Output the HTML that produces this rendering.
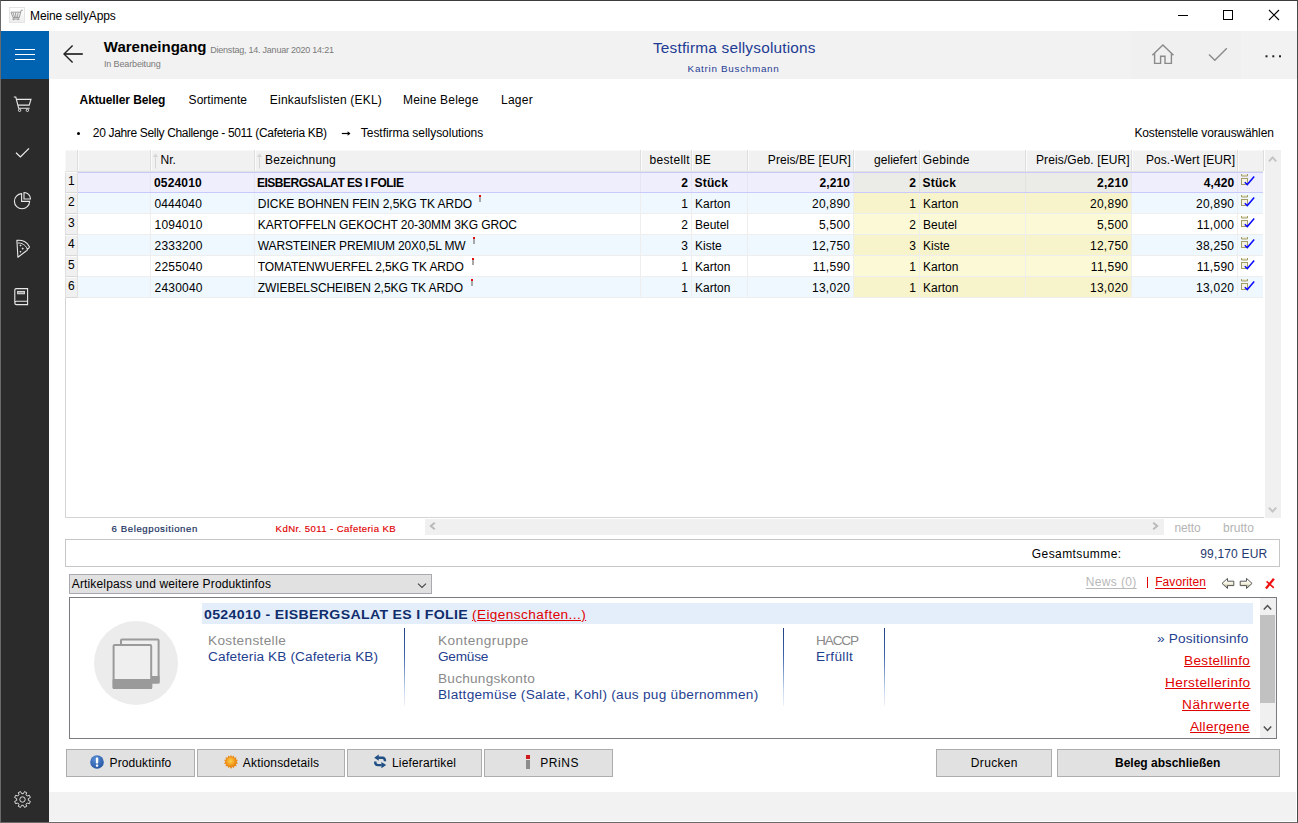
<!DOCTYPE html>
<html lang="de">
<head>
<meta charset="utf-8">
<title>Meine sellyApps</title>
<style>
*{box-sizing:border-box;margin:0;padding:0}
html,body{width:1298px;height:823px;overflow:hidden;background:#fff}
body{font-family:"Liberation Sans",sans-serif;font-size:12px;color:#000;position:relative}
.a{position:absolute}
.t{position:absolute;white-space:nowrap;line-height:1}
.b{font-weight:bold}
svg{position:absolute;overflow:visible}
/* window frame */
#win{position:absolute;left:0;top:0;width:1298px;height:823px;border:1px solid #4a4a4a;border-top-color:#3c3c3c;border-left-color:#6a6a6a;border-bottom-color:#6a6a6a}
/* CHROME-START */
#titlebar{left:1px;top:1px;width:1296px;height:30px;background:#fff}
#hdr{left:49px;top:31px;width:1248px;height:48px;background:#f2f2f2}
#hdr2{left:1131px;top:31px;width:110px;height:48px;background:#f0f0f0}
#burger{left:1px;top:31px;width:48px;height:48px;background:#0063b1}
#side{left:1px;top:79px;width:48px;height:743px;background:#2b2b2b}
#foot{left:49px;top:792px;width:1247px;height:29px;background:#f2f2f2}
/* CHROME-END */
.vd{font-size:12.5px;letter-spacing:0.1px;transform:scaleX(1.09);transform-origin:0 0}
.vd.b{transform:scaleX(1.13)}
.vd.g{color:#8a8a8a}
.vd.n{color:#1f3f8f}
.vd.r{color:#e00000;text-decoration:underline}
.vl{top:628px;width:1px;height:78px;background:linear-gradient(#1f3f7f,#3c64a8 35%,#c8d8ee 80%,#f0f4fb)}
.btn{position:absolute;top:749px;height:28px;background:#e1e1e1;border:1px solid #adadad}

.ex{position:absolute;width:2px;height:7px;background:linear-gradient(#e01010 0,#e01010 2px,#a8a8a8 2px,#a8a8a8 7px)}
#ex1{left:479px}#ex3{left:473px}#ex4{left:472px}#ex5{left:471px}

/* TUNE-START */
#ttl{left:30.0px!important;right:auto!important;top:10px!important;letter-spacing:-0.114px!important}
#h1{left:103.8px!important;right:auto!important;top:39px!important;letter-spacing:-0.009px!important}
#hdate{left:210.3px!important;right:auto!important;top:46px!important;letter-spacing:-0.233px!important}
#hstat{left:104.0px!important;right:auto!important;top:60px!important;letter-spacing:-0.141px!important}
#hfirm{left:652.9px!important;right:auto!important;top:40px!important;letter-spacing:0.192px!important}
#huser{left:687.6px!important;right:auto!important;top:64px!important;letter-spacing:0.699px!important}
#tab1{left:79.6px!important;right:auto!important;top:94px!important;letter-spacing:-0.113px!important}
#tab2{left:188.6px!important;right:auto!important;top:94px!important;letter-spacing:0.035px!important}
#tab3{left:269.8px!important;right:auto!important;top:94px!important;letter-spacing:0.210px!important}
#tab4{left:403.0px!important;right:auto!important;top:94px!important;letter-spacing:0.182px!important}
#tab5{left:501.0px!important;right:auto!important;top:94px!important;letter-spacing:0.250px!important}
#bc1{left:92.8px!important;right:auto!important;top:127px!important;letter-spacing:-0.333px!important}
#bc2{left:360.8px!important;right:auto!important;top:127px!important;letter-spacing:-0.043px!important}
#bc3{left:1134.4px!important;right:auto!important;top:127px!important;letter-spacing:-0.137px!important}
#th0{left:160.6px!important;right:auto!important;top:154px!important;letter-spacing:0.000px!important}
#th1{left:265.0px!important;right:auto!important;top:154px!important;letter-spacing:0.130px!important}
#th2{left:649.6px!important;right:auto!important;top:154px!important;letter-spacing:0.287px!important}
#th3{left:694.8px!important;right:auto!important;top:154px!important;letter-spacing:0.000px!important}
#th4{left:767.8px!important;right:auto!important;top:154px!important;letter-spacing:0.077px!important}
#th5{left:874.1px!important;right:auto!important;top:154px!important;letter-spacing:0.025px!important}
#th6{left:922.8px!important;right:auto!important;top:154px!important;letter-spacing:0.218px!important}
#th7{left:1036.0px!important;right:auto!important;top:154px!important;letter-spacing:0.108px!important}
#th8{left:1145.9px!important;right:auto!important;top:154px!important;letter-spacing:0.057px!important}
#r0c0{left:154.0px!important;right:auto!important;top:177px!important;letter-spacing:0.166px!important}
#r0c1{left:257.0px!important;right:auto!important;top:177px!important;letter-spacing:-0.492px!important}
#r1c1{left:257.8px!important;right:auto!important;top:198px!important;letter-spacing:-0.026px!important}
#r2c1{left:257.8px!important;right:auto!important;top:219px!important;letter-spacing:-0.088px!important}
#r3c1{left:257.8px!important;right:auto!important;top:240px!important;letter-spacing:-0.143px!important}
#r4c1{left:257.8px!important;right:auto!important;top:261px!important;letter-spacing:-0.111px!important}
#r5c1{left:257.8px!important;right:auto!important;top:282px!important;letter-spacing:-0.071px!important}
#r0c3{left:694.6px!important;right:auto!important;top:177px!important;letter-spacing:0.150px!important}
#r0c6{left:922.6px!important;right:auto!important;top:177px!important;letter-spacing:0.150px!important}
#r0c4{left:819.4px!important;right:auto!important;top:177px!important;letter-spacing:0.150px!important}
#r0c7{left:1097.0px!important;right:auto!important;top:177px!important;letter-spacing:0.300px!important}
#r0c8{left:1203.8px!important;right:auto!important;top:177px!important;letter-spacing:0.100px!important}
#st1{left:111.6px!important;right:auto!important;top:524px!important;letter-spacing:0.588px!important}
#st2{left:275.6px!important;right:auto!important;top:524px!important;letter-spacing:0.412px!important}
#st3{left:1174.6px!important;right:auto!important;top:522px!important;letter-spacing:-0.175px!important}
#st4{left:1223.0px!important;right:auto!important;top:522px!important;letter-spacing:0.040px!important}
#sum1{left:1031.8px!important;right:auto!important;top:548px!important;letter-spacing:0.419px!important}
#sum2{left:1200.2px!important;right:auto!important;top:548px!important;letter-spacing:0.179px!important}
#dd{left:71.8px!important;right:auto!important;top:578px!important;letter-spacing:0.143px!important}
#nw1{left:1085.8px!important;right:auto!important;top:576px!important;letter-spacing:0.355px!important}
#nw2{left:1155.2px!important;right:auto!important;top:576px!important;letter-spacing:0.085px!important}
#ip0{left:203.6px!important;right:auto!important;top:609px!important;letter-spacing:0.289px!important}
#ip0b{left:471.8px!important;right:auto!important;top:609px!important;letter-spacing:0.374px!important}
#ip1{left:207.8px!important;right:auto!important;top:635px!important;letter-spacing:0.303px!important}
#ip2{left:207.8px!important;right:auto!important;top:651px!important;letter-spacing:0.096px!important}
#ip3{left:437.8px!important;right:auto!important;top:635px!important;letter-spacing:0.403px!important}
#ip4{left:437.8px!important;right:auto!important;top:651px!important;letter-spacing:-0.210px!important}
#ip5{left:437.8px!important;right:auto!important;top:673px!important;letter-spacing:0.217px!important}
#ip6{left:437.8px!important;right:auto!important;top:689px!important;letter-spacing:0.253px!important}
#ip7{left:815.8px!important;right:auto!important;top:635px!important;letter-spacing:-1.050px!important}
#ip8{left:815.8px!important;right:auto!important;top:651px!important;letter-spacing:0.316px!important}
#ip9{left:1156.8px!important;right:auto!important;top:633px!important;letter-spacing:0.171px!important}
#ip10{left:1184.1px!important;right:auto!important;top:655px!important;letter-spacing:0.280px!important}
#ip11{left:1164.5px!important;right:auto!important;top:677px!important;letter-spacing:0.342px!important}
#ip12{left:1182.2px!important;right:auto!important;top:699px!important;letter-spacing:0.550px!important}
#ip13{left:1189.8px!important;right:auto!important;top:721px!important;letter-spacing:0.225px!important}
#b1{left:109.6px!important;right:auto!important;top:757px!important;letter-spacing:0.100px!important}
#b2{left:242.8px!important;right:auto!important;top:757px!important;letter-spacing:0.167px!important}
#b3{left:392.0px!important;right:auto!important;top:757px!important;letter-spacing:0.158px!important}
#b4{left:540.2px!important;right:auto!important;top:757px!important;letter-spacing:0.600px!important}
#b5{left:970.8px!important;right:auto!important;top:757px!important;letter-spacing:0.334px!important}
#b6{left:1115.0px!important;right:auto!important;top:757px!important;letter-spacing:0.000px!important}
#r1c0{left:154.4px!important;right:auto!important;top:198px!important;letter-spacing:0.116px!important}
#r2c0{left:154.6px!important;right:auto!important;top:219px!important;letter-spacing:0.199px!important}
#r3c0{left:154.6px!important;right:auto!important;top:240px!important;letter-spacing:0.199px!important}
#r4c0{left:154.6px!important;right:auto!important;top:261px!important;letter-spacing:0.199px!important}
#r5c0{left:154.6px!important;right:auto!important;top:282px!important;letter-spacing:0.199px!important}
/* TUNE-END */
</style>
</head>
<body>
<div id="win"></div>
<!-- ============ CHROME ============ -->
<div class="a" id="titlebar"></div>
<div class="a" id="hdr"></div>
<div class="a" id="hdr2"></div>
<div class="a" id="burger"></div>
<div class="a" id="side"></div>
<div class="a" id="foot"></div>
<!-- title bar app icon -->
<div class="a" style="left:9px;top:7px;width:16px;height:16px;border:1px solid #e4e4e4;background:linear-gradient(#fff,#eee)"></div>
<svg style="left:9px;top:7px" width="16" height="16" viewBox="0 0 16 16"><path d="M2 5.2 L4 10.5 H10.3 L12.2 3.2 H13.8 M2 5.2 H11.6 M4.2 6 L5.5 10 M6.5 6 L7 10 M9 6 L8.6 10 M3.5 12 H10.5" fill="none" stroke="#9a9a9a" stroke-width="1"/><circle cx="4.6" cy="12.3" r="0.9" fill="#9a9a9a"/><circle cx="9.2" cy="12.3" r="0.9" fill="#9a9a9a"/></svg>
<div class="t" id="ttl" style="left:30px;top:9px;font-size:12px;letter-spacing:0.1px">Meine sellyApps</div>
<!-- window controls -->
<svg style="left:1170px;top:1px" width="126" height="30" viewBox="0 0 126 30"><path d="M8 14.5 H18" stroke="#000" stroke-width="1" fill="none"/><rect x="53.5" y="9.5" width="9" height="9" stroke="#000" stroke-width="1" fill="none"/><path d="M99 9 L109 19 M109 9 L99 19" stroke="#000" stroke-width="1.1" fill="none"/></svg>
<!-- hamburger -->
<svg style="left:1px;top:31px" width="48" height="48" viewBox="0 0 48 48"><path d="M14 18.5 H34 M14 23.5 H34 M14 28.5 H34" stroke="#fff" stroke-width="1.1" fill="none"/></svg>
<!-- back arrow -->
<svg style="left:60px;top:41px" width="28" height="26" viewBox="0 0 28 26"><path d="M22.8 13 H4.4" stroke="#222" stroke-width="1.7" fill="none"/><path d="M12.6 4.4 L4 13 L12.6 21.6" stroke="#222" stroke-width="1.4" fill="none"/></svg>
<div class="t b" id="h1" style="left:104px;top:40px;font-size:15px;letter-spacing:-0.1px">Wareneingang</div>
<div class="t" id="hdate" style="left:210px;top:45px;font-size:9px;color:#7a7a7a;letter-spacing:-0.1px">Dienstag, 14. Januar 2020 14:21</div>
<div class="t" id="hstat" style="left:104px;top:59px;font-size:9px;color:#7a7a7a">In Bearbeitung</div>
<div class="t" id="hfirm" style="left:652px;top:39px;font-size:15.4px;color:#1e3c94">Testfirma sellysolutions</div>
<div class="t" id="huser" style="left:687px;top:64px;font-size:9.9px;color:#1e3c94;letter-spacing:0.6px">Katrin Buschmann</div>
<!-- header right icons -->
<svg style="left:1150px;top:42px" width="26" height="24" viewBox="0 0 26 24"><path d="M2.3 13.2 L12.9 3 L23.5 13.2 M4.6 11.4 V21.4 H10.6 V14.2 H15 V21.4 H21.4 V11.4" stroke="#8a8a8a" stroke-width="1.4" fill="none" stroke-linejoin="miter"/></svg>
<svg style="left:1207px;top:46px" width="22" height="16" viewBox="0 0 22 16"><path d="M2 8.6 L7.8 14.2 L19.8 2.2" stroke="#8a8a8a" stroke-width="1.4" fill="none"/></svg>
<svg style="left:1264px;top:54px" width="18" height="4" viewBox="0 0 18 4"><rect x="1.5" y="1.3" width="2" height="2" fill="#222"/><rect x="8.3" y="1.3" width="2" height="2" fill="#222"/><rect x="15" y="1.3" width="2" height="2" fill="#222"/></svg>
<!-- sidebar icons -->
<svg id="icart" style="left:13px;top:96px" width="20" height="18" viewBox="0 0 20 18"><path d="M0.8 1 H2.8 L5.6 12.2 H16.6 M3.4 3.4 H18 L16.2 9.1 H4.9" stroke="#e8e8e8" stroke-width="1.1" fill="none"/><circle cx="6.6" cy="14.3" r="1.2" stroke="#e8e8e8" stroke-width="1" fill="none"/><circle cx="14.4" cy="14.3" r="1.2" stroke="#e8e8e8" stroke-width="1" fill="none"/></svg>
<svg id="ichk" style="left:14px;top:146px" width="18" height="14" viewBox="0 0 18 14"><path d="M2 6.8 L6.4 11 L15 2.4" stroke="#f0f0f0" stroke-width="1.2" fill="none"/></svg>
<svg id="ipie" style="left:13px;top:190px" width="20" height="20" viewBox="0 0 20 20"><path d="M8.6 3.6 A7.6 7.6 0 1 0 16.6 11.4 H8.6 Z" stroke="#e8e8e8" stroke-width="1.1" fill="none"/><path d="M11 2.5 A6.5 6.5 0 0 1 17.5 9 H11 Z" stroke="#e8e8e8" stroke-width="1.1" fill="none"/></svg>
<svg id="ipizza" style="left:15px;top:239px" width="17" height="20" viewBox="0 0 17 20"><path d="M1.9 1.4 C7.2 0.6 12.6 3.2 14.4 7.8 C14.2 9.6 12.8 10 12.2 9.6 C12.6 11 11.8 11.8 11.2 12 L2.9 18.2 Z" stroke="#e8e8e8" stroke-width="1.1" fill="none" stroke-linejoin="round"/><path d="M3 4 C6.6 3.8 10.6 6 12.2 9.8" stroke="#e8e8e8" stroke-width="1" fill="none"/><path d="M5.5 5.4 L6.6 6.5 L5.5 7.6 L4.4 6.5 Z M7.7 8.5 L8.8 9.6 L7.7 10.7 L6.6 9.6 Z M5.5 11.7 L6.5 12.7 L5.5 13.7 L4.5 12.7 Z" fill="#e8e8e8"/></svg>
<svg id="ibook" style="left:13px;top:287px" width="17" height="20" viewBox="0 0 17 20"><path d="M1.8 15.6 V3 Q1.8 1.6 3.2 1.6 H14.6 V17.6 H3.6 Q1.8 17.6 1.8 15.9 Q1.8 14.2 3.6 14.2 H14.6" stroke="#e8e8e8" stroke-width="1.1" fill="none"/><rect x="4.6" y="4.4" width="6.8" height="2.4" stroke="#e8e8e8" stroke-width="0.9" fill="#9a9a9a"/></svg>
<svg id="igear" style="left:13px;top:790px" width="19" height="19" viewBox="0 0 19 19"><path d="M10.37 3.66 L11.46 1.64 L13.67 2.56 L13.01 4.76 L14.24 5.99 L16.44 5.33 L17.36 7.54 L15.34 8.63 L15.34 10.37 L17.36 11.46 L16.44 13.67 L14.24 13.01 L13.01 14.24 L13.67 16.44 L11.46 17.36 L10.37 15.34 L8.63 15.34 L7.54 17.36 L5.33 16.44 L5.99 14.24 L4.76 13.01 L2.56 13.67 L1.64 11.46 L3.66 10.37 L3.66 8.63 L1.64 7.54 L2.56 5.33 L4.76 5.99 L5.99 4.76 L5.33 2.56 L7.54 1.64 L8.63 3.66 Z" stroke="#dedede" stroke-width="1" fill="none" stroke-linejoin="round"/><circle cx="9.5" cy="9.5" r="2.7" stroke="#dedede" stroke-width="1" fill="none"/></svg>
<!-- tabs -->
<div class="t b" id="tab1" style="left:80px;top:94px">Aktueller Beleg</div>
<div class="t" id="tab2" style="left:188px;top:94px">Sortimente</div>
<div class="t" id="tab3" style="left:270px;top:94px">Einkaufslisten (EKL)</div>
<div class="t" id="tab4" style="left:404px;top:94px">Meine Belege</div>
<div class="t" id="tab5" style="left:501px;top:94px">Lager</div>
<!-- breadcrumb -->
<div class="a" style="left:77px;top:132px;width:3px;height:3px;border-radius:50%;background:#000"></div>
<div class="t" id="bc1" style="left:92px;top:127px">20 Jahre Selly Challenge - 5011 (Cafeteria KB)</div>
<svg style="left:341px;top:129px" width="10" height="8" viewBox="0 0 10 8"><path d="M0.8 4.5 H9" stroke="#000" stroke-width="1.2" fill="none"/><path d="M6.6 2.2 L9.4 4.5 L6.6 6.8 Z" fill="#000"/></svg>
<div class="t" id="bc2" style="left:360px;top:127px">Testfirma sellysolutions</div>
<div class="t" id="bc3" style="left:1135px;top:127px">Kostenstelle vorauswählen</div>
<svg width="0" height="0" style="left:0;top:0"><defs>
<g id="chk"><path d="M0.5 0 V2 H6.5 V0" stroke="#a39c66" stroke-width="1" fill="#ecebd8"/><rect x="0.5" y="4.5" width="6" height="6" stroke="#a39c66" stroke-width="1" fill="#f3f2e4"/><path d="M3.8 8.2 L6.3 10.6 L13.2 2.6" stroke="#0a0aff" stroke-width="1.5" fill="none"/></g>
</defs></svg>
<!-- TABLE-START -->
<div class="a" style="left:65px;top:150px;width:1199px;height:368px;background:#fff;border-left:1px solid #d4d4d4;border-bottom:1px solid #d4d4d4"></div>
<div class="a" style="left:65px;top:150px;width:1198px;height:22px;background:#f1f1f1;border-top:1px solid #f8f8f8;border-left:1px solid #f7f7f7;border-bottom:1px solid #e3e3de"></div>
<div class="a" style="left:1263px;top:150px;width:1px;height:21px;background:#dedede"></div>
<div class="a" style="left:77px;top:150px;width:1px;height:21px;background:#dedede"></div><div class="a" style="left:78px;top:150px;width:1px;height:21px;background:#fbfbfb"></div>
<div class="a" style="left:150px;top:150px;width:1px;height:21px;background:#dedede"></div><div class="a" style="left:151px;top:150px;width:1px;height:21px;background:#fbfbfb"></div>
<div class="a" style="left:254px;top:150px;width:1px;height:21px;background:#dedede"></div><div class="a" style="left:255px;top:150px;width:1px;height:21px;background:#fbfbfb"></div>
<div class="a" style="left:640px;top:150px;width:1px;height:21px;background:#dedede"></div><div class="a" style="left:641px;top:150px;width:1px;height:21px;background:#fbfbfb"></div>
<div class="a" style="left:691px;top:150px;width:1px;height:21px;background:#dedede"></div><div class="a" style="left:692px;top:150px;width:1px;height:21px;background:#fbfbfb"></div>
<div class="a" style="left:747px;top:150px;width:1px;height:21px;background:#dedede"></div><div class="a" style="left:748px;top:150px;width:1px;height:21px;background:#fbfbfb"></div>
<div class="a" style="left:853px;top:150px;width:1px;height:21px;background:#dedede"></div><div class="a" style="left:854px;top:150px;width:1px;height:21px;background:#fbfbfb"></div>
<div class="a" style="left:919px;top:150px;width:1px;height:21px;background:#dedede"></div><div class="a" style="left:920px;top:150px;width:1px;height:21px;background:#fbfbfb"></div>
<div class="a" style="left:1025px;top:150px;width:1px;height:21px;background:#dedede"></div><div class="a" style="left:1026px;top:150px;width:1px;height:21px;background:#fbfbfb"></div>
<div class="a" style="left:1131px;top:150px;width:1px;height:21px;background:#dedede"></div><div class="a" style="left:1132px;top:150px;width:1px;height:21px;background:#fbfbfb"></div>
<div class="a" style="left:1237px;top:150px;width:1px;height:21px;background:#dedede"></div><div class="a" style="left:1238px;top:150px;width:1px;height:21px;background:#fbfbfb"></div>
<svg style="left:152px;top:153px" width="7" height="16" viewBox="0 0 7 16"><path d="M3.5 1 V15.5" stroke="#d6d6d6" stroke-width="1" fill="none"/><path d="M0.8 4 L3.5 0.6 L6.2 4 Z" fill="#d6d6d6"/></svg>
<svg style="left:256px;top:153px" width="7" height="16" viewBox="0 0 7 16"><path d="M3.5 1 V15.5" stroke="#d6d6d6" stroke-width="1" fill="none"/><path d="M0.8 4 L3.5 0.6 L6.2 4 Z" fill="#d6d6d6"/></svg>
<div class="t" id="th0" style="left:160px;top:154px">Nr.</div>
<div class="t" id="th1" style="left:264px;top:154px">Bezeichnung</div>
<div class="t" id="th2" style="right:609px;top:154px">bestellt</div>
<div class="t" id="th3" style="left:695px;top:154px">BE</div>
<div class="t" id="th4" style="right:448px;top:154px">Preis/BE [EUR]</div>
<div class="t" id="th5" style="right:381px;top:154px">geliefert</div>
<div class="t" id="th6" style="left:923px;top:154px">Gebinde</div>
<div class="t" id="th7" style="right:169px;top:154px">Preis/Geb. [EUR]</div>
<div class="t" id="th8" style="right:64px;top:154px">Pos.-Wert [EUR]</div>
<div class="a" style="left:65px;top:172px;width:12px;height:21px;background:#f0f0f0;border-left:1px solid #e0e0e0;border-top:1px solid #fbfbfb;border-bottom:1px solid #d9d9d9"></div>
<div class="a" style="left:77px;top:172px;width:1px;height:21px;background:#e0e0e0"></div>
<div class="a" style="left:78px;top:172px;width:1185px;height:21px;background:#eeeefd"></div>
<div class="a" style="left:854px;top:172px;width:277px;height:21px;background:#ebebe8"></div>
<div class="a" style="left:150px;top:172px;width:1px;height:21px;background:#e6e6f2"></div>
<div class="a" style="left:254px;top:172px;width:1px;height:21px;background:#e6e6f2"></div>
<div class="a" style="left:640px;top:172px;width:1px;height:21px;background:#e6e6f2"></div>
<div class="a" style="left:691px;top:172px;width:1px;height:21px;background:#e6e6f2"></div>
<div class="a" style="left:747px;top:172px;width:1px;height:21px;background:#e6e6f2"></div>
<div class="a" style="left:853px;top:172px;width:1px;height:21px;background:#e6e6f2"></div>
<div class="a" style="left:919px;top:172px;width:1px;height:21px;background:#e2e2de"></div>
<div class="a" style="left:1025px;top:172px;width:1px;height:21px;background:#e2e2de"></div>
<div class="a" style="left:1131px;top:172px;width:1px;height:21px;background:#e6e6f2"></div>
<div class="a" style="left:1237px;top:172px;width:1px;height:21px;background:#e6e6f2"></div>
<div class="a" style="left:78px;top:172px;width:1185px;height:1px;background:#c9c9fb"></div>
<div class="a" style="left:78px;top:192px;width:1185px;height:1px;background:#c9c9fb"></div>
<div class="t" id="rn0" style="left:68px;top:175px">1</div>
<div class="t b" id="r0c0" style="left:154px;top:177px">0524010</div>
<div class="t b" id="r0c1" style="left:258px;top:177px">EISBERGSALAT ES I FOLIE</div>
<div class="t b" id="r0c2" style="right:610px;top:177px">2</div>
<div class="t b" id="r0c3" style="left:695px;top:177px">Stück</div>
<div class="t b" id="r0c4" style="right:448px;top:177px;letter-spacing:0px">2,210</div>
<div class="t b" id="r0c5" style="right:382px;top:177px">2</div>
<div class="t b" id="r0c6" style="left:923px;top:177px">Stück</div>
<div class="t b" id="r0c7" style="right:170px;top:177px;letter-spacing:0px">2,210</div>
<div class="t b" id="r0c8" style="right:64px;top:177px;letter-spacing:0px">4,420</div>
<svg style="left:1241px;top:174px" width="15" height="13" viewBox="0 0 15 13"><use href="#chk"/></svg>
<div class="a" style="left:65px;top:193px;width:12px;height:21px;background:#f0f0f0;border-left:1px solid #e0e0e0;border-top:1px solid #fbfbfb;border-bottom:1px solid #d9d9d9"></div>
<div class="a" style="left:77px;top:193px;width:1px;height:21px;background:#e0e0e0"></div>
<div class="a" style="left:78px;top:193px;width:1185px;height:21px;background:#eef8fe"></div>
<div class="a" style="left:854px;top:193px;width:277px;height:21px;background:#f7f4cb"></div>
<div class="a" style="left:150px;top:193px;width:1px;height:21px;background:#eeeeee"></div>
<div class="a" style="left:254px;top:193px;width:1px;height:21px;background:#eeeeee"></div>
<div class="a" style="left:640px;top:193px;width:1px;height:21px;background:#eeeeee"></div>
<div class="a" style="left:691px;top:193px;width:1px;height:21px;background:#eeeeee"></div>
<div class="a" style="left:747px;top:193px;width:1px;height:21px;background:#eeeeee"></div>
<div class="a" style="left:853px;top:193px;width:1px;height:21px;background:#eeeeee"></div>
<div class="a" style="left:919px;top:193px;width:1px;height:21px;background:#eeeeea"></div>
<div class="a" style="left:1025px;top:193px;width:1px;height:21px;background:#eeeeea"></div>
<div class="a" style="left:1131px;top:193px;width:1px;height:21px;background:#eeeeee"></div>
<div class="a" style="left:1237px;top:193px;width:1px;height:21px;background:#eeeeee"></div>
<div class="a" style="left:78px;top:213px;width:1185px;height:1px;background:#eeeeee"></div>
<div class="t" id="rn1" style="left:68px;top:196px">2</div>
<div class="t" id="r1c0" style="left:154px;top:198px">0444040</div>
<div class="t" id="r1c1" style="left:258px;top:198px">DICKE BOHNEN FEIN 2,5KG TK ARDO</div>
<div class="t" id="r1c2" style="right:610px;top:198px">1</div>
<div class="t" id="r1c3" style="left:695px;top:198px">Karton</div>
<div class="t" id="r1c4" style="right:447.7px;top:198px;letter-spacing:0.28px">20,890</div>
<div class="t" id="r1c5" style="right:382px;top:198px">1</div>
<div class="t" id="r1c6" style="left:923px;top:198px">Karton</div>
<div class="t" id="r1c7" style="right:169.7px;top:198px;letter-spacing:0.28px">20,890</div>
<div class="t" id="r1c8" style="right:63.7px;top:198px;letter-spacing:0.28px">20,890</div>
<svg style="left:1241px;top:195px" width="15" height="13" viewBox="0 0 15 13"><use href="#chk"/></svg>
<span class="ex" id="ex1" style="top:195px"></span>
<div class="a" style="left:65px;top:214px;width:12px;height:21px;background:#f0f0f0;border-left:1px solid #e0e0e0;border-top:1px solid #fbfbfb;border-bottom:1px solid #d9d9d9"></div>
<div class="a" style="left:77px;top:214px;width:1px;height:21px;background:#e0e0e0"></div>
<div class="a" style="left:78px;top:214px;width:1185px;height:21px;background:#ffffff"></div>
<div class="a" style="left:854px;top:214px;width:277px;height:21px;background:#fcf9d6"></div>
<div class="a" style="left:150px;top:214px;width:1px;height:21px;background:#eeeeee"></div>
<div class="a" style="left:254px;top:214px;width:1px;height:21px;background:#eeeeee"></div>
<div class="a" style="left:640px;top:214px;width:1px;height:21px;background:#eeeeee"></div>
<div class="a" style="left:691px;top:214px;width:1px;height:21px;background:#eeeeee"></div>
<div class="a" style="left:747px;top:214px;width:1px;height:21px;background:#eeeeee"></div>
<div class="a" style="left:853px;top:214px;width:1px;height:21px;background:#eeeeee"></div>
<div class="a" style="left:919px;top:214px;width:1px;height:21px;background:#eeeeea"></div>
<div class="a" style="left:1025px;top:214px;width:1px;height:21px;background:#eeeeea"></div>
<div class="a" style="left:1131px;top:214px;width:1px;height:21px;background:#eeeeee"></div>
<div class="a" style="left:1237px;top:214px;width:1px;height:21px;background:#eeeeee"></div>
<div class="a" style="left:78px;top:234px;width:1185px;height:1px;background:#eeeeee"></div>
<div class="t" id="rn2" style="left:68px;top:217px">3</div>
<div class="t" id="r2c0" style="left:154px;top:219px">1094010</div>
<div class="t" id="r2c1" style="left:258px;top:219px">KARTOFFELN GEKOCHT 20-30MM 3KG GROC</div>
<div class="t" id="r2c2" style="right:610px;top:219px">2</div>
<div class="t" id="r2c3" style="left:695px;top:219px">Beutel</div>
<div class="t" id="r2c4" style="right:447.7px;top:219px;letter-spacing:0.28px">5,500</div>
<div class="t" id="r2c5" style="right:382px;top:219px">2</div>
<div class="t" id="r2c6" style="left:923px;top:219px">Beutel</div>
<div class="t" id="r2c7" style="right:169.7px;top:219px;letter-spacing:0.28px">5,500</div>
<div class="t" id="r2c8" style="right:63.7px;top:219px;letter-spacing:0.28px">11,000</div>
<svg style="left:1241px;top:216px" width="15" height="13" viewBox="0 0 15 13"><use href="#chk"/></svg>
<div class="a" style="left:65px;top:235px;width:12px;height:21px;background:#f0f0f0;border-left:1px solid #e0e0e0;border-top:1px solid #fbfbfb;border-bottom:1px solid #d9d9d9"></div>
<div class="a" style="left:77px;top:235px;width:1px;height:21px;background:#e0e0e0"></div>
<div class="a" style="left:78px;top:235px;width:1185px;height:21px;background:#eef8fe"></div>
<div class="a" style="left:854px;top:235px;width:277px;height:21px;background:#f7f4cb"></div>
<div class="a" style="left:150px;top:235px;width:1px;height:21px;background:#eeeeee"></div>
<div class="a" style="left:254px;top:235px;width:1px;height:21px;background:#eeeeee"></div>
<div class="a" style="left:640px;top:235px;width:1px;height:21px;background:#eeeeee"></div>
<div class="a" style="left:691px;top:235px;width:1px;height:21px;background:#eeeeee"></div>
<div class="a" style="left:747px;top:235px;width:1px;height:21px;background:#eeeeee"></div>
<div class="a" style="left:853px;top:235px;width:1px;height:21px;background:#eeeeee"></div>
<div class="a" style="left:919px;top:235px;width:1px;height:21px;background:#eeeeea"></div>
<div class="a" style="left:1025px;top:235px;width:1px;height:21px;background:#eeeeea"></div>
<div class="a" style="left:1131px;top:235px;width:1px;height:21px;background:#eeeeee"></div>
<div class="a" style="left:1237px;top:235px;width:1px;height:21px;background:#eeeeee"></div>
<div class="a" style="left:78px;top:255px;width:1185px;height:1px;background:#eeeeee"></div>
<div class="t" id="rn3" style="left:68px;top:238px">4</div>
<div class="t" id="r3c0" style="left:154px;top:240px">2333200</div>
<div class="t" id="r3c1" style="left:258px;top:240px">WARSTEINER PREMIUM 20X0,5L MW</div>
<div class="t" id="r3c2" style="right:610px;top:240px">3</div>
<div class="t" id="r3c3" style="left:695px;top:240px">Kiste</div>
<div class="t" id="r3c4" style="right:447.7px;top:240px;letter-spacing:0.28px">12,750</div>
<div class="t" id="r3c5" style="right:382px;top:240px">3</div>
<div class="t" id="r3c6" style="left:923px;top:240px">Kiste</div>
<div class="t" id="r3c7" style="right:169.7px;top:240px;letter-spacing:0.28px">12,750</div>
<div class="t" id="r3c8" style="right:63.7px;top:240px;letter-spacing:0.28px">38,250</div>
<svg style="left:1241px;top:237px" width="15" height="13" viewBox="0 0 15 13"><use href="#chk"/></svg>
<span class="ex" id="ex3" style="top:237px"></span>
<div class="a" style="left:65px;top:256px;width:12px;height:21px;background:#f0f0f0;border-left:1px solid #e0e0e0;border-top:1px solid #fbfbfb;border-bottom:1px solid #d9d9d9"></div>
<div class="a" style="left:77px;top:256px;width:1px;height:21px;background:#e0e0e0"></div>
<div class="a" style="left:78px;top:256px;width:1185px;height:21px;background:#ffffff"></div>
<div class="a" style="left:854px;top:256px;width:277px;height:21px;background:#fcf9d6"></div>
<div class="a" style="left:150px;top:256px;width:1px;height:21px;background:#eeeeee"></div>
<div class="a" style="left:254px;top:256px;width:1px;height:21px;background:#eeeeee"></div>
<div class="a" style="left:640px;top:256px;width:1px;height:21px;background:#eeeeee"></div>
<div class="a" style="left:691px;top:256px;width:1px;height:21px;background:#eeeeee"></div>
<div class="a" style="left:747px;top:256px;width:1px;height:21px;background:#eeeeee"></div>
<div class="a" style="left:853px;top:256px;width:1px;height:21px;background:#eeeeee"></div>
<div class="a" style="left:919px;top:256px;width:1px;height:21px;background:#eeeeea"></div>
<div class="a" style="left:1025px;top:256px;width:1px;height:21px;background:#eeeeea"></div>
<div class="a" style="left:1131px;top:256px;width:1px;height:21px;background:#eeeeee"></div>
<div class="a" style="left:1237px;top:256px;width:1px;height:21px;background:#eeeeee"></div>
<div class="a" style="left:78px;top:276px;width:1185px;height:1px;background:#eeeeee"></div>
<div class="t" id="rn4" style="left:68px;top:259px">5</div>
<div class="t" id="r4c0" style="left:154px;top:261px">2255040</div>
<div class="t" id="r4c1" style="left:258px;top:261px">TOMATENWUERFEL 2,5KG TK ARDO</div>
<div class="t" id="r4c2" style="right:610px;top:261px">1</div>
<div class="t" id="r4c3" style="left:695px;top:261px">Karton</div>
<div class="t" id="r4c4" style="right:447.7px;top:261px;letter-spacing:0.28px">11,590</div>
<div class="t" id="r4c5" style="right:382px;top:261px">1</div>
<div class="t" id="r4c6" style="left:923px;top:261px">Karton</div>
<div class="t" id="r4c7" style="right:169.7px;top:261px;letter-spacing:0.28px">11,590</div>
<div class="t" id="r4c8" style="right:63.7px;top:261px;letter-spacing:0.28px">11,590</div>
<svg style="left:1241px;top:258px" width="15" height="13" viewBox="0 0 15 13"><use href="#chk"/></svg>
<span class="ex" id="ex4" style="top:258px"></span>
<div class="a" style="left:65px;top:277px;width:12px;height:21px;background:#f0f0f0;border-left:1px solid #e0e0e0;border-top:1px solid #fbfbfb;border-bottom:1px solid #d9d9d9"></div>
<div class="a" style="left:77px;top:277px;width:1px;height:21px;background:#e0e0e0"></div>
<div class="a" style="left:78px;top:277px;width:1185px;height:21px;background:#eef8fe"></div>
<div class="a" style="left:854px;top:277px;width:277px;height:21px;background:#f7f4cb"></div>
<div class="a" style="left:150px;top:277px;width:1px;height:21px;background:#eeeeee"></div>
<div class="a" style="left:254px;top:277px;width:1px;height:21px;background:#eeeeee"></div>
<div class="a" style="left:640px;top:277px;width:1px;height:21px;background:#eeeeee"></div>
<div class="a" style="left:691px;top:277px;width:1px;height:21px;background:#eeeeee"></div>
<div class="a" style="left:747px;top:277px;width:1px;height:21px;background:#eeeeee"></div>
<div class="a" style="left:853px;top:277px;width:1px;height:21px;background:#eeeeee"></div>
<div class="a" style="left:919px;top:277px;width:1px;height:21px;background:#eeeeea"></div>
<div class="a" style="left:1025px;top:277px;width:1px;height:21px;background:#eeeeea"></div>
<div class="a" style="left:1131px;top:277px;width:1px;height:21px;background:#eeeeee"></div>
<div class="a" style="left:1237px;top:277px;width:1px;height:21px;background:#eeeeee"></div>
<div class="a" style="left:78px;top:297px;width:1185px;height:1px;background:#eeeeee"></div>
<div class="t" id="rn5" style="left:68px;top:280px">6</div>
<div class="t" id="r5c0" style="left:154px;top:282px">2430040</div>
<div class="t" id="r5c1" style="left:258px;top:282px">ZWIEBELSCHEIBEN 2,5KG TK ARDO</div>
<div class="t" id="r5c2" style="right:610px;top:282px">1</div>
<div class="t" id="r5c3" style="left:695px;top:282px">Karton</div>
<div class="t" id="r5c4" style="right:447.7px;top:282px;letter-spacing:0.28px">13,020</div>
<div class="t" id="r5c5" style="right:382px;top:282px">1</div>
<div class="t" id="r5c6" style="left:923px;top:282px">Karton</div>
<div class="t" id="r5c7" style="right:169.7px;top:282px;letter-spacing:0.28px">13,020</div>
<div class="t" id="r5c8" style="right:63.7px;top:282px;letter-spacing:0.28px">13,020</div>
<svg style="left:1241px;top:279px" width="15" height="13" viewBox="0 0 15 13"><use href="#chk"/></svg>
<span class="ex" id="ex5" style="top:279px"></span>
<div class="a" style="left:1265px;top:150px;width:16px;height:368px;background:#f0f0f0"></div>
<svg style="left:1268px;top:155px" width="9" height="8" viewBox="0 0 9 8"><path d="M1 6.4 L4.6 2.4 L8.2 6.4" stroke="#c4c4c4" stroke-width="2" fill="none"/></svg>
<svg style="left:1268px;top:506px" width="9" height="8" viewBox="0 0 9 8"><path d="M1 1.6 L4.6 5.6 L8.2 1.6" stroke="#c4c4c4" stroke-width="2" fill="none"/></svg>
<!-- TABLE-END -->
<!-- status row under table -->
<div class="t" id="st1" style="left:112px;top:524px;font-size:9.6px;color:#1a3260;letter-spacing:0.9px;-webkit-text-stroke:0.2px #1a3260">6 Belegpositionen</div>
<div class="t" id="st2" style="left:274px;top:524px;font-size:9.6px;color:#e00000;letter-spacing:0.5px;-webkit-text-stroke:0.15px #e00000">KdNr. 5011 - Cafeteria KB</div>
<div class="a" style="left:425px;top:519px;width:739px;height:16px;background:#f0f0f0"></div>
<svg style="left:429px;top:522px" width="7" height="8" viewBox="0 0 7 8"><path d="M5.8 0.8 L1.8 4 L5.8 7.2" stroke="#b9b9b9" stroke-width="1.9" fill="none"/></svg>
<svg style="left:1152px;top:522px" width="7" height="8" viewBox="0 0 7 8"><path d="M1.2 0.8 L5.2 4 L1.2 7.2" stroke="#b9b9b9" stroke-width="1.9" fill="none"/></svg>
<div class="t" id="st3" style="left:1175px;top:522px;color:#b4b4b4">netto</div>
<div class="t" id="st4" style="left:1223px;top:522px;color:#b4b4b4">brutto</div>
<!-- sum box -->
<div class="a" style="left:65px;top:539px;width:1215px;height:28px;background:#fff;border:1px solid #c6c6c6"></div>
<div class="t" id="sum1" style="left:1032px;top:548px">Gesamtsumme:</div>
<div class="t" id="sum2" style="right:31px;top:548px;color:#1f3a6e">99,170 EUR</div>
<!-- dropdown -->
<div class="a" style="left:69px;top:574px;width:363px;height:20px;background:#e1e1e1;border:1px solid #a9a9b1"></div>
<div class="t" id="dd" style="left:72px;top:578px">Artikelpass und weitere Produktinfos</div>
<svg style="left:417px;top:582px" width="10" height="7" viewBox="0 0 10 7"><path d="M1 1.6 L5 5.4 L9 1.6" stroke="#444" stroke-width="1.1" fill="none"/></svg>
<!-- news / favoriten -->
<div class="t" id="nw1" style="left:1086px;top:576px;color:#b8b8b8;text-decoration:underline;text-underline-offset:2px">News (0)</div>
<div class="a" style="left:1147px;top:577px;width:1px;height:11px;background:#e00000"></div>
<div class="t" id="nw2" style="left:1155px;top:576px;color:#e00000;text-decoration:underline;text-underline-offset:2px">Favoriten</div>
<svg style="left:1221px;top:578px" width="14" height="12" viewBox="0 0 14 12"><defs><linearGradient id="ga" x1="0" y1="0" x2="0" y2="1"><stop offset="0.25" stop-color="#ffffff"/><stop offset="0.55" stop-color="#f2efd6"/><stop offset="0.75" stop-color="#b9b9aa"/></linearGradient></defs><path d="M1 5.4 L6.5 0.4 V3.2 H12.8 V7.6 H6.5 V10.5 Z" stroke="#484848" stroke-width="0.9" fill="url(#ga)"/></svg>
<svg style="left:1239px;top:578px" width="14" height="12" viewBox="0 0 14 12"><path d="M13.1 5.4 L7.5 0.4 V3.2 H1.2 V7.6 H7.5 V10.5 Z" stroke="#484848" stroke-width="0.9" fill="url(#ga)"/></svg>
<svg style="left:1264px;top:578px" width="12" height="12" viewBox="0 0 12 12"><path d="M2 10.4 L9.9 0.7" stroke="#f01010" stroke-width="2.3" fill="none"/><path d="M2.6 3.4 L9.8 9.8" stroke="#f01010" stroke-width="1.6" fill="none"/></svg>
<!-- info panel -->
<div class="a" style="left:69px;top:597px;width:1208px;height:142px;background:#fff;border:1px solid #7a7a80"></div>
<div class="a" style="left:94px;top:621px;width:84px;height:84px;border-radius:50%;background:#ececec"></div>
<svg style="left:110px;top:636px" width="52" height="54" viewBox="0 0 52 54"><rect x="11" y="3.5" width="37.6" height="43" rx="1" fill="#efefef" stroke="#9a9a9a" stroke-width="2"/><rect x="10" y="40" width="39.6" height="7.5" fill="#9a9a9a"/><rect x="3.6" y="9" width="37.6" height="43" rx="1" fill="#efefef" stroke="#9a9a9a" stroke-width="2"/><rect x="2.6" y="43" width="39.6" height="10" rx="1" fill="#9a9a9a"/></svg>
<div class="a" style="left:202px;top:603px;width:1051px;height:21px;background:#e4eefb"></div>
<div class="t b vd" id="ip0" style="left:204px;top:608px;color:#0f2d6b">0524010 - EISBERGSALAT ES I FOLIE</div>
<div class="t vd" id="ip0b" style="left:472px;top:608px;color:#e00000;text-decoration:underline">(Eigenschaften...)</div>
<div class="t vd g" id="ip1" style="left:208px;top:634px">Kostenstelle</div>
<div class="t vd n" id="ip2" style="left:208px;top:650px">Cafeteria KB (Cafeteria KB)</div>
<div class="a vl" style="left:404px"></div>
<div class="t vd g" id="ip3" style="left:438px;top:634px">Kontengruppe</div>
<div class="t vd n" id="ip4" style="left:438px;top:650px">Gemüse</div>
<div class="t vd g" id="ip5" style="left:438px;top:672px">Buchungskonto</div>
<div class="t vd n" id="ip6" style="left:438px;top:688px">Blattgemüse (Salate, Kohl) (aus pug übernommen)</div>
<div class="a vl" style="left:783px"></div>
<div class="t vd g" id="ip7" style="left:816px;top:634px">HACCP</div>
<div class="t vd n" id="ip8" style="left:816px;top:650px">Erfüllt</div>
<div class="a vl" style="left:884px"></div>
<div class="t vd n" id="ip9" style="right:49px;top:632px">» Positionsinfo</div>
<div class="t vd r" id="ip10" style="right:49px;top:654px">Bestellinfo</div>
<div class="t vd r" id="ip11" style="right:49px;top:676px">Herstellerinfo</div>
<div class="t vd r" id="ip12" style="right:49px;top:698px">Nährwerte</div>
<div class="t vd r" id="ip13" style="right:49px;top:720px">Allergene</div>
<!-- inner scrollbar -->
<div class="a" style="left:1260px;top:598px;width:16px;height:140px;background:#f0f0f0"></div>
<div class="a" style="left:1260px;top:615px;width:15px;height:88px;background:#c1c1c1"></div>
<svg style="left:1263px;top:604px" width="9" height="7" viewBox="0 0 9 7"><path d="M0.8 5.6 L4.5 1.6 L8.2 5.6" stroke="#505050" stroke-width="1.5" fill="none"/></svg>
<svg style="left:1263px;top:725px" width="9" height="7" viewBox="0 0 9 7"><path d="M0.8 1.4 L4.5 5.4 L8.2 1.4" stroke="#505050" stroke-width="1.5" fill="none"/></svg>
<!-- buttons -->
<div class="btn" style="left:66px;width:129px"></div>
<div class="btn" style="left:197px;width:148px"></div>
<div class="btn" style="left:347px;width:135px"></div>
<div class="btn" style="left:484px;width:129px"></div>
<div class="btn" style="left:936px;width:116px"></div>
<div class="btn" style="left:1057px;width:223px"></div>
<svg style="left:90px;top:755px" width="14" height="14" viewBox="0 0 14 14"><defs><radialGradient id="gb" cx="0.4" cy="0.3" r="0.8"><stop offset="0" stop-color="#5b8fd6"/><stop offset="1" stop-color="#1e4f9e"/></radialGradient></defs><circle cx="7" cy="7" r="6.8" fill="url(#gb)"/><rect x="5.9" y="2.4" width="2.3" height="6" rx="0.6" fill="#fff"/><rect x="5.9" y="9.4" width="2.3" height="2.3" rx="0.6" fill="#fff"/></svg>
<div class="t" id="b1" style="left:109px;top:757px">Produktinfo</div>
<svg style="left:224px;top:755px" width="14" height="14" viewBox="0 0 14 14"><defs><radialGradient id="go" cx="0.45" cy="0.4" r="0.7"><stop offset="0" stop-color="#ffd24a"/><stop offset="0.6" stop-color="#f39a1e"/><stop offset="1" stop-color="#d9730c"/></radialGradient></defs><path d="M7 0 L8.1 1.8 L9.9 0.6 L10.3 2.7 L12.4 2.3 L12 4.4 L14 5 L12.6 6.6 L14 8.4 L12 9 L12.6 11.2 L10.4 10.9 L10 13.1 L8.2 11.9 L7 14 L5.8 11.9 L4 13.1 L3.6 10.9 L1.4 11.2 L2 9 L0 8.4 L1.4 6.6 L0 5 L2 4.4 L1.6 2.3 L3.7 2.7 L4.1 0.6 L5.9 1.8 Z" fill="#e88a1a"/><circle cx="7" cy="7" r="5" fill="url(#go)"/></svg>
<div class="t" id="b2" style="left:243px;top:757px">Aktionsdetails</div>
<svg style="left:374px;top:755px" width="13" height="14" viewBox="0 0 13 14"><path d="M4.4 2.7 H8.4 Q11 2.7 11 6.2" stroke="#1f4e84" stroke-width="2.4" fill="none"/><path d="M0.2 2.7 L4.8 -0.4 V5.8 Z" fill="#1f4e84"/><path d="M7.6 10.1 H3.8 Q1.2 10.1 1.2 6.6" stroke="#1f4e84" stroke-width="2.4" fill="none"/><path d="M12.2 10.1 L7.4 7 V13.3 Z" fill="#1f4e84"/></svg>
<div class="t" id="b3" style="left:392px;top:757px">Lieferartikel</div>
<div class="a" style="left:526px;top:755px;width:4px;height:4px;background:#d01818"></div>
<div class="a" style="left:526px;top:760px;width:4px;height:9px;background:#8c8c8c"></div>
<div class="t" id="b4" style="left:540px;top:757px">PRiNS</div>
<div class="t" id="b5" style="left:971px;top:757px">Drucken</div>
<div class="t b" id="b6" style="left:1116px;top:757px">Beleg abschließen</div>
</body>
</html>
